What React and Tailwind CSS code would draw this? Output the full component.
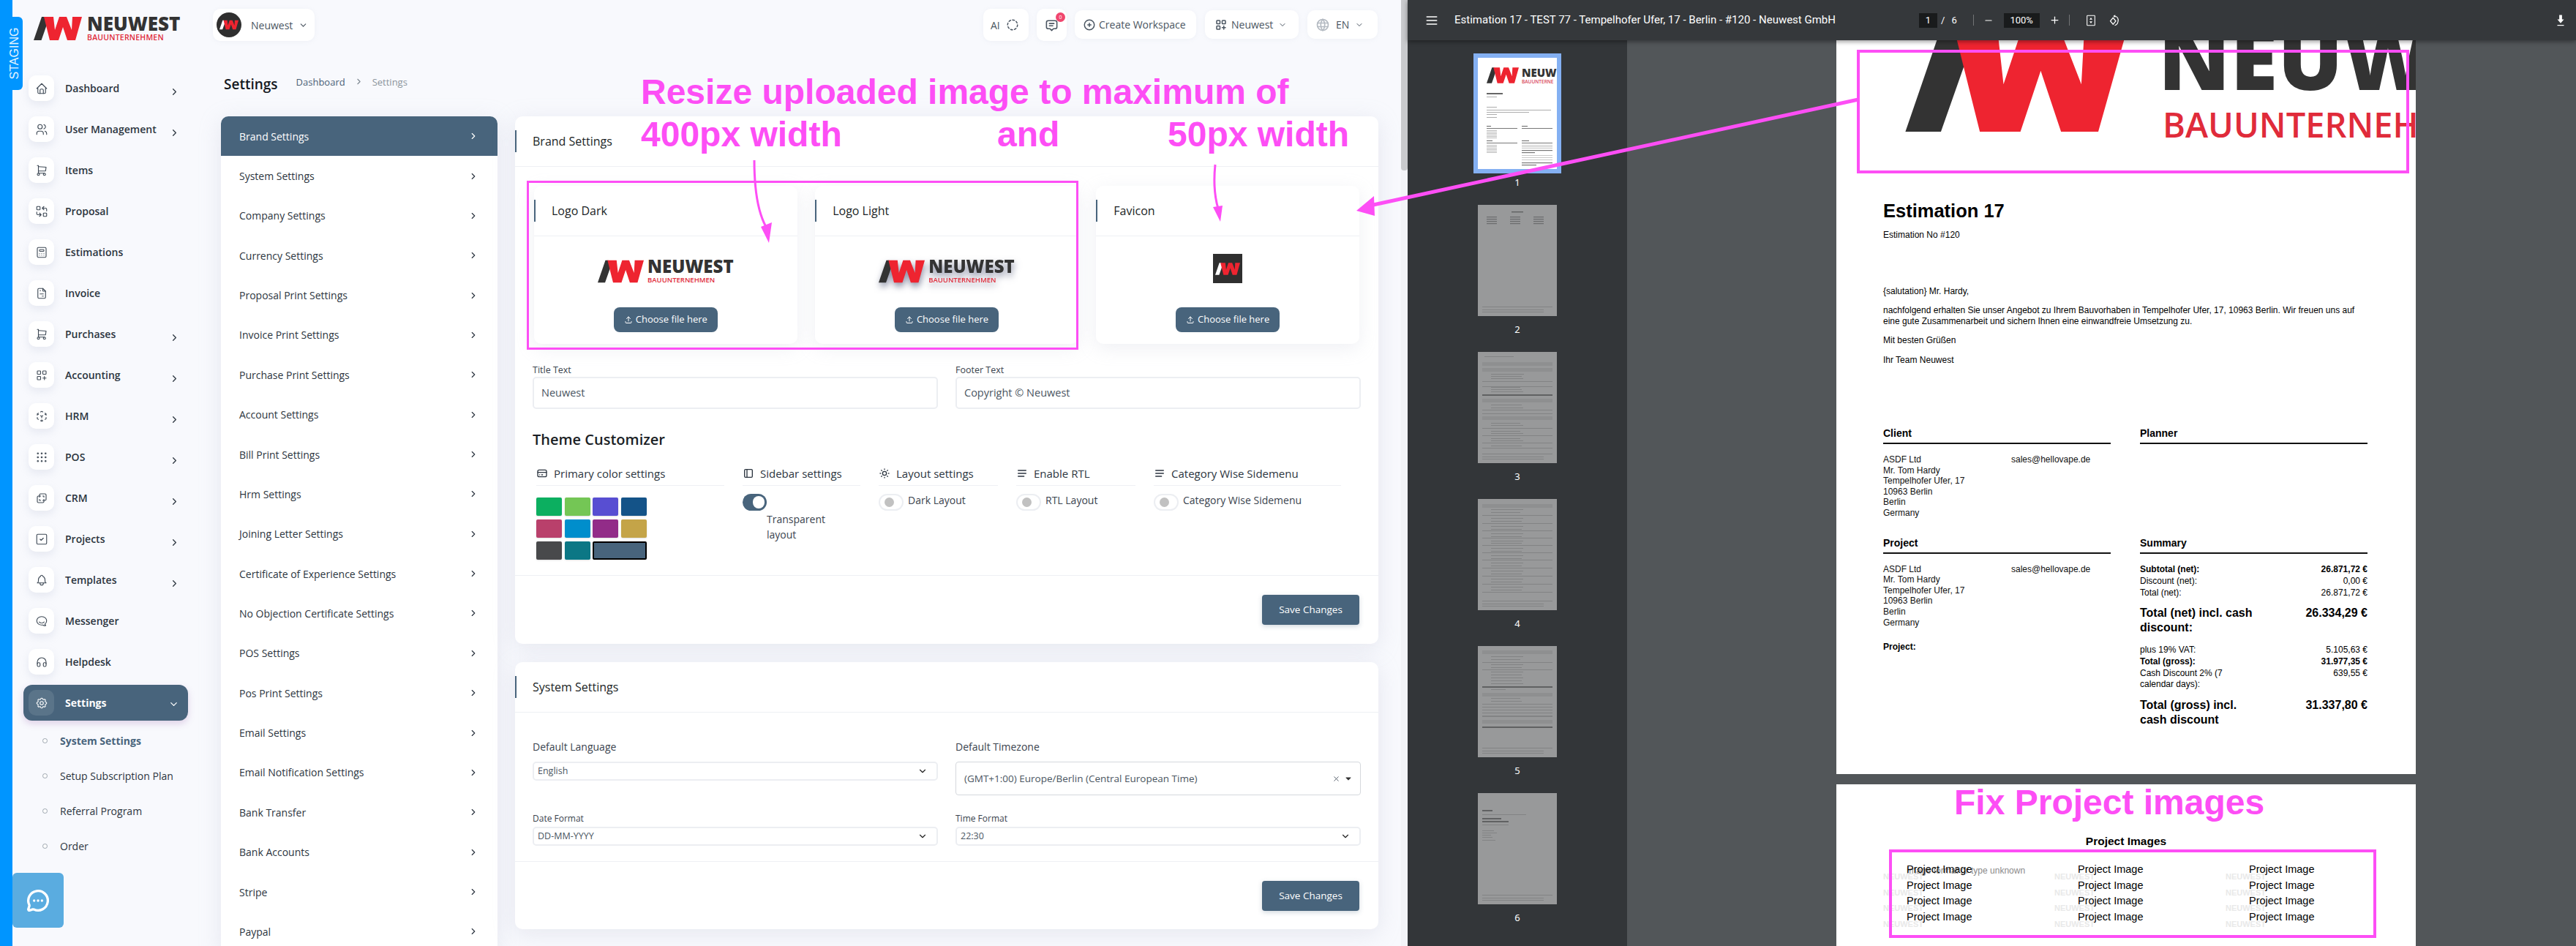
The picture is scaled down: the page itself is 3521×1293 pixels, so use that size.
import React from "react";
import { MessageCircleMore } from "lucide-react";
import {
  TbHome,
  TbUsers,
  TbShoppingCart,
  TbReplace,
  TbCalculator,
  TbFileInvoice,
  TbLayoutGridAdd,
  TbGridDots,
  TbLayersDifference,
  TbSquareCheck,
  TbBell,
  TbBrandHipchat,
  TbHeadphones,
  TbSettings,
  TbChevronRight,
  TbChevronDown,
  TbUpload,
  TbCirclePlus,
  TbWorld,
  TbMessage2,
  TbCircleDashed,
  TbCreditCard,
  TbLayoutSidebar,
  TbSun,
  TbAlignJustified,
  TbMenu2,
  TbMinus,
  TbPlus,
  TbCaretDownFilled,
  TbX,
} from "react-icons/tb";

// tabler's 3d-cube-sphere, not in the icon package under that name
function CubeSphere({ className, strokeWidth = 2 }) {
  return (
    <svg
      viewBox="0 0 24 24"
      width="1em"
      height="1em"
      fill="none"
      stroke="currentColor"
      strokeWidth={strokeWidth}
      strokeLinecap="round"
      strokeLinejoin="round"
      className={className}
    >
      <path d="M6 17.6l-2 -1.1v-2.5M4 10v-2.5l2 -1.1M10 4.1l2 -1.1l2 1.1M18 6.4l2 1.1v2.5M20 14v2.5l-2 1.12M14 19.9l-2 1.1l-2 -1.1M12 12l2 -1.1M18 8.6l2 -1.1M12 12v2.5M12 18.5v2.5M12 12l-2 -1.12M6 8.6l-2 -1.1" />
    </svg>
  );
}

function FitIcon({ className }) {
  return (
    <svg viewBox="0 0 20 24" className={className} fill="none" stroke="currentColor" strokeWidth="1.6">
      <rect x="2" y="2" width="16" height="20" rx="1" />
      <polygon points="10,6 13,10 7,10" fill="currentColor" stroke="none" />
      <polygon points="10,18 13,14 7,14" fill="currentColor" stroke="none" />
    </svg>
  );
}

function RotateIcon({ className }) {
  return (
    <svg viewBox="0 0 20 24" className={className} fill="none" stroke="currentColor" strokeWidth="1.6">
      <polygon points="9,7 14,13 9,19 4,13" />
      <path d="M12 4 C17 5 19 9 18 14 C17.5 17 15.5 20 12 21" />
      <polygon points="9,4 13,1.5 13,6.5" fill="currentColor" stroke="none" />
    </svg>
  );
}

function SaveIcon({ className }) {
  return (
    <svg viewBox="0 0 16 24" className={className} fill="currentColor">
      <rect x="5.5" y="2" width="5" height="9" />
      <polygon points="2,10 14,10 8,17" />
      <rect x="2" y="20" width="12" height="1.6" />
    </svg>
  );
}

const navItems = [
  { label: "Dashboard", icon: TbHome, arrow: true },
  { label: "User Management", icon: TbUsers, arrow: true },
  { label: "Items", icon: TbShoppingCart },
  { label: "Proposal", icon: TbReplace },
  { label: "Estimations", icon: TbCalculator },
  { label: "Invoice", icon: TbFileInvoice },
  { label: "Purchases", icon: TbShoppingCart, arrow: true },
  { label: "Accounting", icon: TbLayoutGridAdd, arrow: true },
  { label: "HRM", icon: CubeSphere, arrow: true },
  { label: "POS", icon: TbGridDots, arrow: true },
  { label: "CRM", icon: TbLayersDifference, arrow: true },
  { label: "Projects", icon: TbSquareCheck, arrow: true },
  { label: "Templates", icon: TbBell, arrow: true },
  { label: "Messenger", icon: TbBrandHipchat },
  { label: "Helpdesk", icon: TbHeadphones },
];

const subItems = ["System Settings", "Setup Subscription Plan", "Referral Program", "Order"];

const settingsList = [
  "Brand Settings",
  "System Settings",
  "Company Settings",
  "Currency Settings",
  "Proposal Print Settings",
  "Invoice Print Settings",
  "Purchase Print Settings",
  "Account Settings",
  "Bill Print Settings",
  "Hrm Settings",
  "Joining Letter Settings",
  "Certificate of Experience Settings",
  "No Objection Certificate Settings",
  "POS Settings",
  "Pos Print Settings",
  "Email Settings",
  "Email Notification Settings",
  "Bank Transfer",
  "Bank Accounts",
  "Stripe",
  "Paypal",
];

const swatches = [
  "#0CAF60", "#74C655", "#584ED2", "#145388",
  "#B9406B", "#008ECC", "#922C88", "#C4A448",
  "#48494B", "#0C7785",
];

const addressLines = ["ASDF Ltd", "Mr. Tom Hardy", "Tempelhofer Ufer, 17", "10963 Berlin", "Berlin", "Germany"];

// the NW mark, used in the logos and the favicon
function Mark({ className, slash = "#333333" }) {
  return (
    <svg viewBox="0 0 66 32" className={className}>
      <polygon points="0,32 10.5,32 20,5 15,0 11,0" fill={slash} />
      <polygon
        points="14,0 27,0 29,18 35,0 45,0 52,18 53,0 66,0 57,32 46,32 40,14 34,32 22,32"
        fill="#EE2430"
      />
    </svg>
  );
}

function Logo({ markClass, nameClass, subClass, className = "" }) {
  return (
    <div className={"flex items-start " + className}>
      <Mark className={markClass} />
      <div className="flex flex-col font-['Open_Sans',sans-serif]">
        <span className={"font-extrabold text-[#333333] whitespace-nowrap " + nameClass}>NEUWEST</span>
        <span className={"font-semibold text-[#E02B3A] whitespace-nowrap " + subClass}>BAUUNTERNEHMEN</span>
      </div>
    </div>
  );
}

function Accent({ children, className = "" }) {
  return (
    <div className={"flex items-center border-b border-[#eef0f4] " + className}>
      <div className="w-[2px] h-[30px] bg-[#48647c]" />
      <h5 className="pl-[22px] text-[16px] font-medium text-[#1b1f26]">{children}</h5>
    </div>
  );
}

function NavRow({ item }) {
  const Icon = item.icon;
  return (
    <div className="flex items-center h-[35px] mb-[21px] ml-[22px]">
      <div className="w-[35px] h-[35px] rounded-[10px] bg-white flex items-center justify-center shadow-[0_5px_12px_rgba(170,178,200,0.22)]">
        <Icon className="text-[18px] text-[#3f4a56]" strokeWidth={1.5} />
      </div>
      <span className="ml-[15px] text-[14px] font-semibold text-[#2c3540]">{item.label}</span>
      {item.arrow && (
        <TbChevronRight className="absolute left-[214px] mt-[10px] text-[15px] text-[#2c3540]" />
      )}
    </div>
  );
}

function Sidebar() {
  return (
    <aside className="w-[285px] flex-none pt-[25px] relative">
      {navItems.map((item) => (
        <NavRow key={item.label} item={item} />
      ))}
      <div className="ml-[15px] w-[225px] h-[49px] -mt-[7px] rounded-[12px] bg-[#48647c] flex items-center pl-[7px] shadow-[0_4px_10px_rgba(150,90,170,0.25)]">
        <div className="w-[35px] h-[35px] rounded-[10px] bg-white/10 flex items-center justify-center">
          <TbSettings className="text-[18px] text-white" strokeWidth={1.5} />
        </div>
        <span className="ml-[15px] text-[14px] font-bold text-white">Settings</span>
        <TbChevronDown className="ml-auto mr-[12px] mt-[4px] text-[15px] text-white" />
      </div>
      <div className="mt-[3px]">
        {subItems.map((s, i) => (
          <div key={s} className="h-[48px] flex items-center ml-[41px]">
            <span className="w-[7px] h-[7px] rounded-full border border-[#9aa3ad] bg-white" />
            <span
              className={
                i === 0
                  ? "ml-[17px] text-[14px] font-bold text-[#48647c]"
                  : "ml-[17px] text-[14px] text-[#2c3540]"
              }
            >
              {s}
            </span>
          </div>
        ))}
      </div>
    </aside>
  );
}

function TopChip({ children, className = "" }) {
  return (
    <div className={"bg-white rounded-[10px] flex items-center text-[#4a5561] text-[14px] shadow-[0_1px_6px_rgba(170,178,200,0.12)] " + className}>
      {children}
    </div>
  );
}

function TopBar() {
  return (
    <header className="h-[78px] flex-none flex items-start pt-[12px]">
      <Logo
        className="ml-[29px] mt-[10px] w-[245px]"
        markClass="w-[66px] h-[34px] mr-[7px]"
        nameClass="text-[26px] leading-[22px] -mt-[1px]"
        subClass="text-[10.5px] leading-[14px] tracking-[0.02em] mt-[1px]"
      />
      <div className="w-[139px] h-[44px] bg-white rounded-[10px] flex items-center pl-[5px] shadow-[0_1px_6px_rgba(170,178,200,0.12)]">
        <div className="w-[34px] h-[34px] rounded-full bg-[#2f2f2f] flex items-center justify-center">
          <Mark className="w-[26px] h-[14px]" slash="#ffffff" />
        </div>
        <span className="ml-[13px] text-[14px] text-[#4a5561]">Neuwest</span>
        <TbChevronDown className="ml-[8px] text-[13px] text-[#4a5561]" />
      </div>
      <div className="ml-auto mr-[32px] flex items-start">
        <TopChip className="w-[62px] h-[44px] pl-[10px]">
          <span>AI</span>
          <TbCircleDashed className="ml-[8px] text-[18px]" />
        </TopChip>
        <TopChip className="relative w-[41px] h-[44px] ml-[11px] justify-center">
          <TbMessage2 className="text-[19px]" />
          <span className="absolute right-[2px] top-[5px] w-[13px] h-[13px] rounded-full bg-[#f0466e] text-white text-[7px] leading-[13px] text-center">0</span>
        </TopChip>
        <TopChip className="w-[166px] h-[39px] mt-[2px] ml-[11px] pl-[11px]">
          <TbCirclePlus className="text-[18px] flex-none" />
          <span className="ml-[4px] whitespace-nowrap">Create Workspace</span>
        </TopChip>
        <TopChip className="w-[128px] h-[39px] mt-[2px] ml-[12px] pl-[13px]">
          <TbLayoutGridAdd className="text-[18px] flex-none" />
          <span className="ml-[5px]">Neuwest</span>
          <TbChevronDown className="ml-[7px] text-[12px]" />
        </TopChip>
        <TopChip className="w-[96px] h-[39px] mt-[2px] ml-[12px] pl-[11px]">
          <TbWorld className="text-[20px] text-[#b4bac2]" />
          <span className="ml-[8px]">EN</span>
          <TbChevronDown className="ml-[8px] text-[12px]" />
        </TopChip>
      </div>
    </header>
  );
}

function SettingsList() {
  return (
    <div className="w-[378px] flex-none">
      <div className="bg-white rounded-t-[10px] overflow-hidden shadow-[0_6px_30px_rgba(182,186,203,0.28)]">
        {settingsList.map((s, i) => (
          <div
            key={s}
            className={
              i === 0
                ? "h-[54.36px] flex items-center justify-between pl-[25px] pr-[26px] bg-[#48647c] text-white"
                : "h-[54.36px] flex items-center justify-between pl-[25px] pr-[26px] text-[#2c3540]"
            }
          >
            <span className="text-[14px]">{s}</span>
            <TbChevronRight className="text-[14px]" />
          </div>
        ))}
      </div>
    </div>
  );
}

function LogoCard({ title, children }) {
  return (
    <div className="bg-white rounded-[10px] h-[216px] shadow-[0_6px_24px_rgba(182,186,203,0.22)] flex flex-col">
      <Accent className="h-[69px] flex-none">{title}</Accent>
      <div className="h-[65px] flex items-center justify-center mt-[16px]">{children}</div>
      <div className="flex justify-center mt-[16px]">
        <div className="w-[142px] h-[34px] rounded-[8px] bg-[#48647c] text-white flex items-center justify-center gap-[4px] text-[13px] font-medium">
          <TbUpload className="text-[12px]" />
          Choose file here
        </div>
      </div>
    </div>
  );
}

function CardLogo({ className = "" }) {
  return (
    <Logo
      className={className}
      markClass="w-[63px] h-[32px] mr-[5px]"
      nameClass="text-[24px] leading-[22px] -mt-[2px]"
      subClass="text-[9.5px] leading-[12px] mt-[2px]"
    />
  );
}

function Field({ label, value }) {
  return (
    <div>
      <label className="block text-[12.5px] leading-[16px] text-[#3a434e] mb-[1px]">{label}</label>
      <div className="h-[44px] rounded-[5px] border-2 border-[#eceef2] bg-white flex items-center pl-[10px] text-[14.5px] text-[#4a5561]">
        {value}
      </div>
    </div>
  );
}

function Select({ value }) {
  return (
    <div className="h-[26px] rounded-[5px] border-2 border-[#eceef2] flex items-center justify-between pl-[5px] pr-[12px] text-[12.5px] text-[#4a5561]">
      {value}
      <TbChevronDown className="text-[14px] text-[#222]" />
    </div>
  );
}

function ThemeHead({ icon: Icon, children }) {
  return (
    <div className="h-[27px] border-b border-[#eef0f4] flex items-start text-[15px] leading-[21px] font-medium text-[#2c3540]">
      <Icon className="text-[16px] mt-[2px] mr-[8px] text-[#2c3540] flex-none" />
      {children}
    </div>
  );
}

function OffToggle({ label }) {
  return (
    <div className="flex items-start mt-[11px]">
      <div className="w-[34px] h-[23px] rounded-full border-2 border-[#eceef2] bg-white flex items-center pl-[6px] flex-none">
        <span className="w-[13px] h-[13px] rounded-full bg-[#c1c1c1]" />
      </div>
      <span className="ml-[6px] text-[14px] leading-[18px] text-[#3a434e] whitespace-nowrap">{label}</span>
    </div>
  );
}

function SaveRow() {
  return (
    <div className="flex justify-end pr-[26px] pt-[26px] border-t border-[#eef0f4]">
      <div className="w-[133px] h-[41px] rounded-[4px] bg-[#48647c] text-white text-[13.5px] font-medium flex items-center justify-center shadow-[0_2px_6px_rgba(72,100,124,0.25)]">
        Save Changes
      </div>
    </div>
  );
}

function BrandCard() {
  return (
    <section className="bg-white rounded-[10px] h-[721px] shadow-[0_6px_30px_rgba(182,186,203,0.28)]">
      <Accent className="h-[69px]">Brand Settings</Accent>
      <div className="px-[24px] pt-[26px]">
        <div className="grid grid-cols-3 gap-[24.5px] mx-[2px]">
          <LogoCard title="Logo Dark">
            <CardLogo />
          </LogoCard>
          <LogoCard title="Logo Light">
            <CardLogo className="[filter:drop-shadow(1px_5px_5px_rgba(40,50,90,0.55))]" />
          </LogoCard>
          <LogoCard title="Favicon">
            <div className="w-[40px] h-[40px] -mt-[9px] bg-[#2f2f2f] flex items-center justify-center">
              <Mark className="w-[34px] h-[17px]" slash="#ffffff" />
            </div>
          </LogoCard>
        </div>
        <div className="grid grid-cols-2 gap-[24px] mt-[28px]">
          <Field label="Title Text" value="Neuwest" />
          <Field label="Footer Text" value="Copyright © Neuwest" />
        </div>
        <h4 className="mt-[28px] text-[20px] leading-[28px] font-semibold text-[#1b1f26]">Theme Customizer</h4>
        <div className="grid grid-cols-[257px_161px_163px_163px_256px] gap-x-[25px] ml-[5px] mt-[22px] h-[149px]">
          <div>
            <ThemeHead icon={TbCreditCard}>Primary color settings</ThemeHead>
            <div className="grid grid-cols-[35px_35px_35px_35px] gap-x-[3.6px] gap-y-[5px] mt-[16px] w-[151px]">
              {swatches.map((c) => (
                <span key={c} className="h-[25px] rounded-[2px] shadow-sm" style={{ backgroundColor: c }} />
              ))}
              <span className="col-span-2 h-[25px] rounded-[2px] bg-[#48647c] border-2 border-black" />
            </div>
          </div>
          <div>
            <ThemeHead icon={TbLayoutSidebar}>Sidebar settings</ThemeHead>
            <div className="w-[33px] h-[23px] mt-[11px] rounded-full bg-[#48647c] flex items-center justify-end pr-[3px]">
              <span className="w-[16px] h-[17px] rounded-full bg-white" />
            </div>
            <p className="ml-[33px] mt-[1px] w-[100px] text-[14px] leading-[21px] text-[#3a434e]">Transparent layout</p>
          </div>
          <div>
            <ThemeHead icon={TbSun}>Layout settings</ThemeHead>
            <OffToggle label="Dark Layout" />
          </div>
          <div>
            <ThemeHead icon={TbAlignJustified}>Enable RTL</ThemeHead>
            <OffToggle label="RTL Layout" />
          </div>
          <div>
            <ThemeHead icon={TbAlignJustified}>Category Wise Sidemenu</ThemeHead>
            <OffToggle label="Category Wise Sidemenu" />
          </div>
        </div>
      </div>
      <SaveRow />
    </section>
  );
}

function SystemCard() {
  return (
    <section className="bg-white rounded-[10px] h-[365px] mt-[25px] shadow-[0_6px_30px_rgba(182,186,203,0.28)]">
      <Accent className="h-[69px]">System Settings</Accent>
      <div className="h-[203px] px-[24px] pt-[37px]">
        <div className="grid grid-cols-2 gap-x-[24px]">
          <div>
            <label className="block text-[14px] leading-[20px] font-medium text-[#3a434e] mb-[10px]">Default Language</label>
            <Select value="English" />
          </div>
          <div>
            <label className="block text-[14px] leading-[20px] font-medium text-[#3a434e] mb-[10px]">Default Timezone</label>
            <div className="h-[46px] rounded-[4px] border border-[#d5d8dd] flex items-center pl-[11px] pr-[10px] text-[13.5px] text-[#4a5561]">
              (GMT+1:00) Europe/Berlin (Central European Time)
              <TbX className="ml-auto text-[11px]" />
              <TbCaretDownFilled className="ml-[5px] text-[12px] text-[#333]" />
            </div>
          </div>
          <div className="mt-[24px]">
            <label className="block text-[12px] leading-[16px] text-[#3a434e] mb-[3px]">Date Format</label>
            <Select value="DD-MM-YYYY" />
          </div>
          <div className="mt-[24px]">
            <label className="block text-[12px] leading-[16px] text-[#3a434e] mb-[3px]">Time Format</label>
            <Select value="22:30" />
          </div>
        </div>
      </div>
      <SaveRow />
    </section>
  );
}

function AppWindow() {
  return (
    <div className="relative w-[1924px] flex-none h-full bg-[#f8f9fd] flex font-['Open_Sans',sans-serif] overflow-hidden">
      <div className="w-[17px] flex-none bg-[#0095ff]" />
      <div className="absolute left-[9px] top-[23px] w-[22px] h-[100px] rounded-r-[6px] bg-[#0095ff] flex items-center justify-center">
        <span className="-rotate-90 text-[16px] text-white/90 font-['Liberation_Sans',sans-serif] whitespace-nowrap">STAGING</span>
      </div>
      <div className="absolute left-[17px] top-[1193px] w-[70px] h-[75px] rounded-[6px] bg-[#5aace0] flex items-center justify-center">
        <MessageCircleMore className="w-[32px] h-[32px] text-white" strokeWidth={2.5} />
      </div>
      <div className="flex-1 flex flex-col min-w-0">
        <TopBar />
        <div className="flex flex-1 min-h-0">
          <Sidebar />
          <main className="flex-1 min-w-0">
            <div className="h-[81px] flex items-start pl-[4px] pt-[22px]">
              <h1 className="text-[19px] leading-[30px] font-semibold text-[#15191f]">Settings</h1>
              <span className="ml-[25px] text-[13px] leading-[24px] text-[#4a6076]">Dashboard</span>
              <TbChevronRight className="ml-[12px] mt-[5px] text-[13px] text-[#7d8791]" />
              <span className="ml-[12px] text-[13px] leading-[24px] text-[#8c949c]">Settings</span>
            </div>
            <div className="flex gap-[24px] items-start">
              <SettingsList />
              <div className="w-[1180px] flex-none">
                <BrandCard />
                <SystemCard />
              </div>
            </div>
          </main>
        </div>
      </div>
      <div className="w-[9px] flex-none bg-[#f3f4f8]">
        <div className="h-[233px] rounded-b-[4px] bg-[#c9cacd]" />
      </div>
    </div>
  );
}

// grey placeholder lines of the dimmed page previews
const thumbRows = {
  3: [[6, 9, 40, 1], [14, 6, 96, 5], [22, 6, 96, 5], [30, 18, 45, 1], [33, 18, 42, 1], [36, 18, 44, 1], [40, 6, 96, 1], [48, 18, 40, 1], [51, 18, 42, 1], [54, 18, 44, 1], [47, 6, 96, 1], [58, 6, 96, 2], [64, 6, 96, 5], [72, 18, 42, 1], [76, 18, 44, 1], [79, 6, 96, 1], [84, 6, 96, 1], [88, 6, 96, 5], [97, 18, 40, 1], [100, 18, 44, 1], [104, 6, 96, 1], [108, 18, 40, 1], [111, 18, 44, 1], [114, 6, 96, 1], [118, 18, 40, 1], [121, 18, 44, 1], [124, 6, 96, 1], [128, 18, 42, 1], [131, 6, 96, 1], [139, 6, 96, 1], [143, 6, 84, 1], [146, 6, 84, 1]],
  4: [[7, 6, 96, 5], [14, 18, 44, 1], [18, 18, 40, 1], [22, 6, 96, 1], [26, 18, 44, 1], [30, 18, 42, 1], [33, 6, 96, 1], [37, 18, 44, 1], [41, 18, 42, 1], [43, 6, 96, 1], [47, 18, 44, 1], [51, 18, 42, 1], [53, 6, 96, 1], [57, 18, 44, 1], [60, 18, 42, 1], [63, 6, 96, 1], [67, 18, 44, 1], [71, 18, 42, 1], [73, 6, 96, 1], [77, 18, 44, 1], [81, 18, 42, 1], [83, 6, 96, 1], [87, 18, 44, 1], [91, 18, 42, 1], [94, 6, 96, 1], [98, 18, 44, 1], [102, 18, 42, 1], [105, 6, 96, 1], [109, 18, 44, 1], [113, 18, 42, 1], [116, 6, 96, 1], [120, 18, 44, 1], [124, 18, 42, 1], [127, 6, 96, 1], [139, 6, 96, 1], [143, 6, 84, 1], [146, 6, 84, 1]],
  5: [[6, 6, 96, 5], [14, 18, 44, 1], [18, 18, 40, 1], [22, 6, 96, 1], [25, 18, 44, 1], [29, 18, 42, 1], [32, 6, 96, 1], [35, 18, 44, 1], [39, 18, 42, 1], [43, 18, 44, 1], [47, 18, 42, 1], [51, 18, 44, 1], [55, 6, 96, 2], [59, 18, 20, 1], [64, 6, 96, 5], [71, 18, 40, 1], [75, 18, 42, 1], [79, 6, 96, 1], [83, 6, 96, 1], [87, 6, 96, 1], [91, 6, 96, 1], [95, 6, 96, 1], [96, 6, 96, 1], [101, 6, 96, 5], [110, 6, 96, 2], [139, 6, 96, 1], [143, 6, 84, 1], [146, 6, 84, 1]],
  6: [[23, 6, 14, 2], [29, 6, 60, 1], [34, 6, 26, 2], [38, 6, 36, 2], [43, 6, 36, 1], [51, 6, 16, 1], [54, 6, 20, 1], [57, 6, 12, 1], [60, 6, 14, 1], [64, 6, 18, 1], [139, 6, 96, 1], [143, 6, 84, 1], [146, 6, 84, 1]],
};

function DimThumb({ page }) {
  const rows = thumbRows[page];
  return (
    <svg viewBox="0 0 108 152" className="w-[108px] h-[152px] bg-[#98999a] flex-none">
      {rows.map(([y, x, w, h], i) => (
        <rect key={i} x={x} y={y} width={w} height={h} fill={h === 5 ? "#8e8f90" : h === 2 ? "#606162" : "#828384"} />
      ))}
    </svg>
  );
}

function Page2Thumb() {
  const rows = [0, 1, 2, 3];
  return (
    <svg viewBox="0 0 108 152" className="w-[108px] h-[152px] bg-[#98999a] flex-none">
      <rect x="46" y="9" width="16" height="1.4" fill="#606162" />
      {rows.map((r) =>
        [12, 44, 76].map((x) => <rect key={r + "-" + x} x={x} y={16 + r * 3} width="14" height="1.2" fill="#6b6c6d" />)
      )}
      <rect x="6" y="139" width="96" height="1" fill="#828384" />
      <rect x="6" y="143" width="84" height="1" fill="#828384" />
      <rect x="6" y="146" width="84" height="1" fill="#828384" />
    </svg>
  );
}

function ActiveThumb() {
  return (
    <div className="border-[6px] border-[#84b0f2] flex-none">
      <div className="w-[108px] h-[152px] bg-white overflow-hidden pt-[13px] pl-[12px] flex flex-col">
        <div className="flex items-start h-[22px]">
          <Mark className="w-[44px] h-[22px] mr-[4px] flex-none" />
          <div className="flex flex-col font-['Open_Sans',sans-serif] overflow-hidden">
            <span className="text-[15px] leading-[15px] font-extrabold text-[#333]">NEUW</span>
            <span className="text-[6.5px] leading-[9px] font-semibold text-[#d8465a]">BAUUNTERNE</span>
          </div>
        </div>
        <svg viewBox="0 0 96 112" className="w-[96px] h-[112px] mt-[3px] -ml-[4px]">
          <rect x="4" y="10" width="22" height="2" fill="#666" />
          <rect x="4" y="15" width="14" height="0.8" fill="#999" />
          <rect x="4" y="29" width="14" height="0.8" fill="#999" />
          <rect x="4" y="33" width="88" height="0.8" fill="#999" />
          <rect x="4" y="36" width="58" height="0.8" fill="#999" />
          <rect x="4" y="39" width="14" height="0.8" fill="#999" />
          <rect x="4" y="43" width="14" height="0.8" fill="#999" />
          <rect x="4" y="55" width="6" height="1" fill="#666" />
          <rect x="52" y="55" width="8" height="1" fill="#666" />
          <rect x="4" y="58" width="42" height="0.8" fill="#555" />
          <rect x="52" y="58" width="42" height="0.8" fill="#555" />
          {[61, 63, 65, 67, 69, 71].map((y) => (
            <rect key={y} x="4" y={y} width="14" height="0.8" fill="#aaa" />
          ))}
          <rect x="4" y="75" width="8" height="1" fill="#666" />
          <rect x="52" y="75" width="10" height="1" fill="#666" />
          <rect x="4" y="78" width="42" height="0.8" fill="#555" />
          <rect x="52" y="78" width="42" height="0.8" fill="#555" />
          {[81, 83, 85, 87, 89, 91].map((y) => (
            <rect key={y} x="4" y={y} width="14" height="0.8" fill="#aaa" />
          ))}
          {[81, 83, 85].map((y) => (
            <rect key={y} x="52" y={y} width="42" height="0.8" fill="#bbb" />
          ))}
          <rect x="52" y="88" width="42" height="1.2" fill="#777" />
          <rect x="52" y="91" width="18" height="1.2" fill="#777" />
          <rect x="52" y="95" width="42" height="0.8" fill="#bbb" />
          <rect x="52" y="98" width="42" height="0.8" fill="#bbb" />
          <rect x="52" y="101" width="42" height="0.8" fill="#bbb" />
          <rect x="52" y="105" width="42" height="1.2" fill="#777" />
          <rect x="52" y="108" width="20" height="1.2" fill="#777" />
        </svg>
      </div>
    </div>
  );
}

function ThumbLabel({ n, className = "" }) {
  return <span className={"text-[13px] leading-[18px] text-white " + className}>{n}</span>;
}

function Thumbs() {
  return (
    <aside className="w-[300px] flex-none bg-[#333639] flex flex-col items-center pt-[18px] overflow-hidden">
      <ActiveThumb />
      <ThumbLabel n="1" className="mt-[3px]" />
      <div className="mt-[22px]"><Page2Thumb /></div>
      <ThumbLabel n="2" className="mt-[9px]" />
      {[3, 4, 5, 6].map((p) => (
        <React.Fragment key={p}>
          <div className="mt-[22px]"><DimThumb page={p} /></div>
          <ThumbLabel n={p} className="mt-[9px]" />
        </React.Fragment>
      ))}
    </aside>
  );
}

function Toolbar() {
  return (
    <div className="relative z-10 h-[55px] flex-none bg-[#35383b] shadow-[0_2px_6px_rgba(0,0,0,0.4)] flex items-center text-white font-['Roboto',sans-serif]">
      <TbMenu2 className="ml-[23px] text-[20px]" />
      <span className="ml-[21px] w-[635px] flex-none text-[15px] whitespace-nowrap">
        Estimation 17 - TEST 77 - Tempelhofer Ufer, 17 - Berlin - #120 - Neuwest GmbH
      </span>
      <span className="w-[25px] h-[20px] bg-[#191b1c] flex items-center justify-center text-[13px]">1</span>
      <span className="ml-[5px] text-[13px]">/</span>
      <span className="ml-[9px] text-[13px]">6</span>
      <span className="ml-[22px] w-px h-[15px] bg-white/30" />
      <TbMinus className="ml-[13px] text-[14px]" />
      <span className="ml-[14px] w-[49px] h-[20px] bg-[#191b1c] flex items-center justify-center text-[13px]">100%</span>
      <TbPlus className="ml-[13px] text-[15px]" />
      <span className="ml-[12px] w-px h-[15px] bg-white/30" />
      <FitIcon className="ml-[19px] w-[20px] h-[16px]" />
      <RotateIcon className="ml-[11px] w-[20px] h-[18px]" />
      <SaveIcon className="ml-auto mr-[14px] w-[14px] h-[18px]" />
    </div>
  );
}

function Address() {
  return (
    <div className="flex mt-[14px] text-[12px] leading-[14.6px] text-[#111]">
      <div className="w-[175px]">
        {addressLines.map((l) => (
          <div key={l}>{l}</div>
        ))}
      </div>
      <div>sales@hellovape.de</div>
    </div>
  );
}

function SumRow({ label, value, bold, className = "" }) {
  return (
    <div className={"flex justify-between leading-[15px] " + (bold ? "font-bold " : "") + className}>
      <span className="w-[118px]">{label}</span>
      <span>{value}</span>
    </div>
  );
}

function BigRow({ label, value, className = "" }) {
  return (
    <div className={"flex justify-between text-[16px] leading-[20px] font-bold " + className}>
      <span className="w-[170px]">{label}</span>
      <span>{value}</span>
    </div>
  );
}

function SectionHead({ children }) {
  return <h3 className="h-[24px] border-b-2 border-[#111] text-[14px] leading-[18px] font-bold">{children}</h3>;
}

function PageOne() {
  return (
    <div className="w-[792px] h-[1003px] flex-none bg-white overflow-hidden font-['Liberation_Sans',sans-serif] text-black">
      <div className="flex items-start h-[125px] -mt-[23px] pl-[94px]">
        <Mark className="w-[306px] h-[148px] flex-none" />
        <div className="ml-[40px] flex flex-col font-['Open_Sans',sans-serif] flex-none">
          <span className="text-[118px] leading-[100px] -mt-[4px] font-extrabold text-[#333]">NEUWEST</span>
          <span className="text-[47px] leading-[50px] mt-[17px] font-semibold text-[#E02B3A] ml-[6px]">BAUUNTERNEHMEN</span>
        </div>
      </div>
      <div className="pl-[64px] pr-[65px]">
        <h2 className="mt-[116px] text-[25.5px] leading-[30px] font-bold">Estimation 17</h2>
        <p className="mt-[11px] text-[12px] leading-[14px]">Estimation No #120</p>
        <p className="mt-[63px] text-[12px] leading-[15px]">{"{salutation} Mr. Hardy,"}</p>
        <p className="mt-[11px] text-[12px] leading-[15px]">
          nachfolgend erhalten Sie unser Angebot zu Ihrem Bauvorhaben in Tempelhofer Ufer, 17, 10963 Berlin. Wir freuen uns auf eine gute Zusammenarbeit und sichern Ihnen eine einwandfreie Umsetzung zu.
        </p>
        <p className="mt-[11px] text-[12px] leading-[15px]">Mit besten Grüßen</p>
        <p className="mt-[12px] text-[12px] leading-[15px]">Ihr Team Neuwest</p>
        <div className="grid grid-cols-[311px_311px] gap-x-[40px] mt-[83px]">
          <div>
            <SectionHead>Client</SectionHead>
            <Address />
          </div>
          <div>
            <SectionHead>Planner</SectionHead>
          </div>
          <div className="mt-[24px]">
            <SectionHead>Project</SectionHead>
            <Address />
            <p className="mt-[19px] text-[12px] font-bold leading-[15px]">Project:</p>
          </div>
          <div className="mt-[24px]">
            <SectionHead>Summary</SectionHead>
            <div className="mt-[14px] text-[12px]">
              <SumRow label="Subtotal (net):" value="26.871,72 €" bold className="h-[16px]" />
              <SumRow label="Discount (net):" value="0,00 €" className="h-[16px]" />
              <SumRow label="Total (net):" value="26.871,72 €" className="h-[16px]" />
              <BigRow label="Total (net) incl. cash discount:" value="26.334,29 €" className="mt-[9px]" />
              <SumRow label="plus 19% VAT:" value="5.105,63 €" className="mt-[13px] h-[16px]" />
              <SumRow label="Total (gross):" value="31.977,35 €" bold className="h-[16px]" />
              <SumRow label="Cash Discount 2% (7 calendar days):" value="639,55 €" />
              <BigRow label="Total (gross) incl. cash discount" value="31.337,80 €" className="mt-[11px]" />
            </div>
          </div>
        </div>
      </div>
    </div>
  );
}

function PageTwo() {
  const cells = Array.from({ length: 12 }, (_, i) => i);
  return (
    <div className="w-[792px] flex-1 mt-[14px] bg-white overflow-hidden relative font-['Liberation_Sans',sans-serif] text-black">
      <h3 className="mt-[68px] text-center text-[15.5px] leading-[20px] font-bold">Project Images</h3>
      <div className="grid grid-cols-3 ml-[96px] w-[702px] mt-[18px]">
        {cells.map((i) => (
          <div key={i} className="relative h-[21.7px] text-[14.5px] leading-[21px]">
            <span className="absolute -left-[32px] top-[10px] text-[11px] text-[#e9e9e9] font-bold">NEUWEST</span>
            {i === 0 && (
              <span className="absolute left-0 top-[2px] text-[12px] text-[#8a8a8a] whitespace-nowrap">Image format or type unknown</span>
            )}
            <span className="relative">Project Image</span>
          </div>
        ))}
      </div>
    </div>
  );
}

function PdfWindow() {
  return (
    <div className="flex-1 min-w-0 h-full flex flex-col">
      <Toolbar />
      <div className="flex-1 flex min-h-0">
        <Thumbs />
        <div className="flex-1 min-w-0 bg-[#525659] pl-[286px] flex flex-col">
          <PageOne />
          <PageTwo />
        </div>
      </div>
    </div>
  );
}

// magenta review notes drawn on top of the screenshot
function Annotations() {
  const textClass = "absolute font-['Liberation_Sans',sans-serif] font-bold text-[48px] leading-[54px] text-[#fd4ef5] whitespace-nowrap";
  return (
    <>
      <span className={textClass + " left-[876px] top-[99px]"}>Resize uploaded image to maximum of</span>
      <span className={textClass + " left-[876px] top-[157px]"}>400px width</span>
      <span className={textClass + " left-[1363px] top-[157px]"}>and</span>
      <span className={textClass + " left-[1596px] top-[157px]"}>50px width</span>
      <span className={textClass + " left-[2671px] top-[1070px]"}>Fix Project images</span>
      <div className="absolute left-[720px] top-[247px] w-[754px] h-[231px] border-[3px] border-[#fd4ef5]" />
      <div className="absolute left-[2538px] top-[68px] w-[755px] h-[169px] border-[4px] border-[#fd4ef5]" />
      <div className="absolute left-[2582px] top-[1161px] w-[666px] h-[121px] border-[4px] border-[#fd4ef5]" />
      <svg className="absolute left-0 top-0 pointer-events-none" width="3521" height="1293">
        <path d="M1031 219 C1031 262 1036 290 1047 310" fill="none" stroke="#fd4ef5" strokeWidth="3" />
        <polygon points="1040,310 1055,304 1051,332" fill="#fd4ef5" />
        <path d="M1661 225 C1659 245 1659 265 1665 285" fill="none" stroke="#fd4ef5" strokeWidth="3" />
        <polygon points="1658,283 1671,281 1668,303" fill="#fd4ef5" />
        <line x1="2540" y1="136" x2="1868" y2="282" stroke="#fd4ef5" strokeWidth="5" />
        <polygon points="1854,288 1878,268 1879,295" fill="#fd4ef5" />
      </svg>
    </>
  );
}

export default function App() {
  return (
    <div className="relative w-[3521px] h-[1293px] flex overflow-hidden">
      <AppWindow />
      <PdfWindow />
      <Annotations />
    </div>
  );
}
